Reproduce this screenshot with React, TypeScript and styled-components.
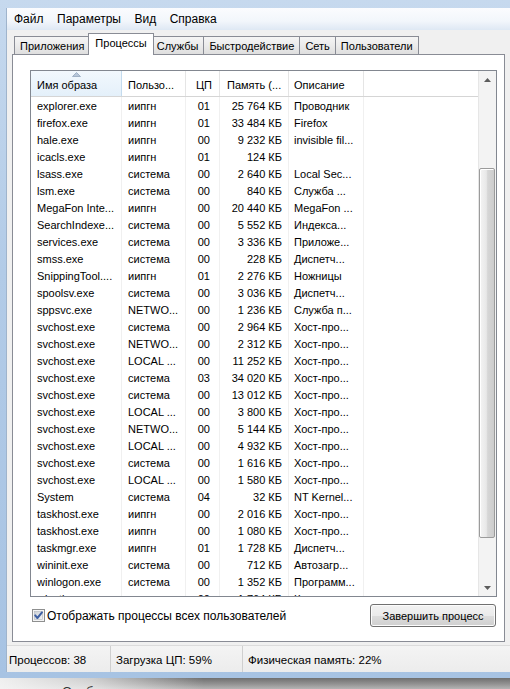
import React from "react";
import styled, { createGlobalStyle } from "styled-components";

const GlobalStyle = createGlobalStyle`
  html, body {
    margin: 0;
    padding: 0;
    background: #ffffff;
  }
  body {
    font-family: "Segoe UI", "Liberation Sans", Arial, sans-serif;
    color: #000;
  }
`;

interface Proc {
  name: string;
  user: string;
  cpu: string;
  mem: string;
  desc: string;
}

const processes: Proc[] = [
  { name: "explorer.exe", user: "иипгн", cpu: "01", mem: "25 764 КБ", desc: "Проводник" },
  { name: "firefox.exe", user: "иипгн", cpu: "01", mem: "33 484 КБ", desc: "Firefox" },
  { name: "hale.exe", user: "иипгн", cpu: "00", mem: "9 232 КБ", desc: "invisible fil..." },
  { name: "icacls.exe", user: "иипгн", cpu: "01", mem: "124 КБ", desc: "" },
  { name: "lsass.exe", user: "система", cpu: "00", mem: "2 640 КБ", desc: "Local Sec..." },
  { name: "lsm.exe", user: "система", cpu: "00", mem: "840 КБ", desc: "Служба ..." },
  { name: "MegaFon Inte...", user: "иипгн", cpu: "00", mem: "20 440 КБ", desc: "MegaFon ..." },
  { name: "SearchIndexe...", user: "система", cpu: "00", mem: "5 552 КБ", desc: "Индекса..." },
  { name: "services.exe", user: "система", cpu: "00", mem: "3 336 КБ", desc: "Приложе..." },
  { name: "smss.exe", user: "система", cpu: "00", mem: "228 КБ", desc: "Диспетч..." },
  { name: "SnippingTool....", user: "иипгн", cpu: "01", mem: "2 276 КБ", desc: "Ножницы" },
  { name: "spoolsv.exe", user: "система", cpu: "00", mem: "3 036 КБ", desc: "Диспетч..." },
  { name: "sppsvc.exe", user: "NETWO...", cpu: "00", mem: "1 236 КБ", desc: "Служба п..." },
  { name: "svchost.exe", user: "система", cpu: "00", mem: "2 964 КБ", desc: "Хост-про..." },
  { name: "svchost.exe", user: "NETWO...", cpu: "00", mem: "2 312 КБ", desc: "Хост-про..." },
  { name: "svchost.exe", user: "LOCAL ...", cpu: "00", mem: "11 252 КБ", desc: "Хост-про..." },
  { name: "svchost.exe", user: "система", cpu: "03", mem: "34 020 КБ", desc: "Хост-про..." },
  { name: "svchost.exe", user: "система", cpu: "00", mem: "13 012 КБ", desc: "Хост-про..." },
  { name: "svchost.exe", user: "LOCAL ...", cpu: "00", mem: "3 800 КБ", desc: "Хост-про..." },
  { name: "svchost.exe", user: "NETWO...", cpu: "00", mem: "5 144 КБ", desc: "Хост-про..." },
  { name: "svchost.exe", user: "LOCAL ...", cpu: "00", mem: "4 932 КБ", desc: "Хост-про..." },
  { name: "svchost.exe", user: "система", cpu: "00", mem: "1 616 КБ", desc: "Хост-про..." },
  { name: "svchost.exe", user: "LOCAL ...", cpu: "00", mem: "1 580 КБ", desc: "Хост-про..." },
  { name: "System", user: "система", cpu: "04", mem: "32 КБ", desc: "NT Kernel..." },
  { name: "taskhost.exe", user: "иипгн", cpu: "00", mem: "2 016 КБ", desc: "Хост-про..." },
  { name: "taskhost.exe", user: "иипгн", cpu: "00", mem: "1 080 КБ", desc: "Хост-про..." },
  { name: "taskmgr.exe", user: "иипгн", cpu: "01", mem: "1 728 КБ", desc: "Диспетч..." },
  { name: "wininit.exe", user: "система", cpu: "00", mem: "712 КБ", desc: "Автозагр..." },
  { name: "winlogon.exe", user: "система", cpu: "00", mem: "1 352 КБ", desc: "Программ..." },
  { name: "wisptis.exe", user: "иипгн", cpu: "00", mem: "1 764 КБ", desc: "Компон..." },
];

type Align = "left" | "right";

interface Column {
  key: keyof Proc;
  title: string;
  width: number;
  headAlign: Align;
  bodyAlign: Align;
  headPad: number;
  bodyPad: number;
}

const columns: Column[] = [
  { key: "name", title: "Имя образа", width: 91, headAlign: "left", bodyAlign: "left", headPad: 6, bodyPad: 6 },
  { key: "user", title: "Пользо...", width: 64, headAlign: "left", bodyAlign: "left", headPad: 6, bodyPad: 6 },
  { key: "cpu", title: "ЦП", width: 34, headAlign: "right", bodyAlign: "right", headPad: 7, bodyPad: 10 },
  { key: "mem", title: "Память (...", width: 69, headAlign: "left", bodyAlign: "right", headPad: 7, bodyPad: 7 },
  { key: "desc", title: "Описание", width: 75, headAlign: "left", bodyAlign: "left", headPad: 5, bodyPad: 5 },
];

const tabs = ["Приложения", "Процессы", "Службы", "Быстродействие", "Сеть", "Пользователи"];
const menu = ["Файл", "Параметры", "Вид", "Справка"];

const SortArrow = () => (
  <SortMark width="9" height="5" viewBox="0 0 9 5">
    <path d="M0.5 4.5 L4.5 0.5 L8.5 4.5 Z" fill="#b7c6d8" stroke="#93a6bd" strokeWidth="0.8" />
  </SortMark>
);

const Arrow: React.FC<{ down?: boolean }> = ({ down }) => (
  <svg width="7" height="4" viewBox="0 0 7 4">
    <path d={down ? "M0 0 H7 L3.5 4 Z" : "M0 4 H7 L3.5 0 Z"} fill="#5c5c5c" />
  </svg>
);

const CheckIcon = () => (
  <svg width="13" height="13" viewBox="0 0 13 13">
    <defs>
      <linearGradient id="cbInner" x1="0" y1="0" x2="1" y2="1">
        <stop offset="0" stopColor="#cbd0d6" />
        <stop offset="1" stopColor="#f6f6f6" />
      </linearGradient>
    </defs>
    <rect x="0.5" y="0.5" width="12" height="12" fill="#f4f4f4" stroke="#8e8f8f" />
    <rect x="2.5" y="2.5" width="8" height="8" fill="url(#cbInner)" stroke="#b2b7bd" strokeWidth="0.6" />
    <path d="M3.2 6.4 L5.4 9 L10 3.4" fill="none" stroke="#3f60a3" strokeWidth="2" strokeLinecap="round" strokeLinejoin="round" />
  </svg>
);

export default function App() {
  return (
    <>
      <GlobalStyle />
      <Screen>
        <Frame>
          <Client>
            <MenuBar>
              {menu.map((m) => (
                <MenuItem key={m}>{m}</MenuItem>
              ))}
            </MenuBar>
            <TabStrip>
              {tabs.map((t) => (
                <Tab key={t} $active={t === "Процессы"}>
                  {t}
                </Tab>
              ))}
            </TabStrip>
            <Panel>
              <ListView>
                <ListMain>
                  <HeaderRow>
                    {columns.map((c, i) => (
                      <HeaderCell
                        key={c.key}
                        $width={c.width}
                        $align={c.headAlign}
                        $pad={c.headPad}
                        $sorted={i === 0}
                      >
                        {i === 0 && <SortArrow />}
                        {c.title}
                      </HeaderCell>
                    ))}
                    <HeaderFiller />
                  </HeaderRow>
                  <Body>
                    {processes.map((p, r) => (
                      <Row key={r}>
                        {columns.map((c) => (
                          <Cell key={c.key} $width={c.width} $align={c.bodyAlign} $pad={c.bodyPad}>
                            {p[c.key]}
                          </Cell>
                        ))}
                      </Row>
                    ))}
                  </Body>
                </ListMain>
                <ScrollBar>
                  <ScrollButton>
                    <Arrow />
                  </ScrollButton>
                  <ScrollThumb />
                  <ScrollRest />
                  <ScrollButton>
                    <Arrow down />
                  </ScrollButton>
                </ScrollBar>
              </ListView>
              <BottomRow>
                <CheckLabel>
                  <CheckIcon />
                  Отображать процессы всех пользователей
                </CheckLabel>
                <EndButton>Завершить процесс</EndButton>
              </BottomRow>
            </Panel>
            <StatusBar>
              <StatusCell $width={104} $pad={2}>
                Процессов: 38
              </StatusCell>
              <StatusCell $width={132} $pad={5}>
                Загрузка ЦП: 59%
              </StatusCell>
              <StatusCell $pad={5} $last>
                Физическая память: 22%
              </StatusCell>
            </StatusBar>
          </Client>
        </Frame>
        <Outside>
          <OutsideText>Особые</OutsideText>
        </Outside>
      </Screen>
    </>
  );
}

const Screen = styled.div`
  width: 510px;
  height: 689px;
  overflow: hidden;
  display: flex;
  flex-direction: column;
  background: #ffffff;
`;

const Frame = styled.div`
  height: 678px;
  box-sizing: border-box;
  padding: 8px 0 6px 6px;
  background: linear-gradient(to bottom, #c6d9ee 0%, #b2cbe7 40%, #a7c3e3 100%);
  display: flex;
`;

const Client = styled.div`
  flex: 1;
  display: flex;
  flex-direction: column;
  background: #f0f0f0;
  border-left: 1px solid #9fb4cc;
`;

const MenuBar = styled.div`
  height: 22px;
  display: flex;
  align-items: center;
  font-size: 12px;
  background: linear-gradient(to bottom, #fbfcfe 0%, #f2f6fb 60%, #dee8f4 100%);
`;

const MenuItem = styled.div`
  padding: 0 6.5px 0 7px;
  line-height: 22px;
`;

const TabStrip = styled.div`
  height: 24px;
  display: flex;
  align-items: flex-end;
  padding-left: 6px;
  font-size: 11px;
  position: relative;
  z-index: 1;
`;

const Tab = styled.div<{ $active?: boolean }>`
  box-sizing: border-box;
  height: ${(p) => (p.$active ? "22px" : "18px")};
  margin: ${(p) => (p.$active ? "0 -2px -1px -2px" : "0 0 0 -1px")};
  padding: ${(p) => (p.$active ? "0 6px 4px" : "1px 5px 0")};
  display: flex;
  align-items: center;
  border: 1px solid #898c95;
  border-bottom: none;
  background: ${(p) =>
    p.$active ? "#ffffff" : "linear-gradient(to bottom, #f5f5f5 0%, #ebebeb 50%, #dedede 100%)"};
  position: relative;
  z-index: ${(p) => (p.$active ? 2 : 1)};
  white-space: nowrap;

  &:first-child {
    margin-left: 1px;
  }
`;

const Panel = styled.div`
  box-sizing: border-box;
  height: 588px;
  margin: 0 5px;
  border: 1px solid #898c95;
  background: #ffffff;
  padding: 15px 7px 14px 17px;
  display: flex;
  flex-direction: column;
  gap: 7px;
`;

const ListView = styled.div`
  box-sizing: border-box;
  height: 527px;
  border: 1px solid #828790;
  display: flex;
  overflow: hidden;
  font-size: 11px;
`;

const ListMain = styled.div`
  flex: 1;
  min-width: 0;
  display: flex;
  flex-direction: column;
`;

const HeaderRow = styled.div`
  box-sizing: border-box;
  height: 26px;
  flex: none;
  display: flex;
  border-bottom: 1px solid #d5d5d5;
`;

const HeaderCell = styled.div<{ $width: number; $align: Align; $pad: number; $sorted?: boolean }>`
  box-sizing: border-box;
  position: relative;
  width: ${(p) => p.$width}px;
  flex: none;
  display: flex;
  align-items: center;
  justify-content: ${(p) => (p.$align === "right" ? "flex-end" : "flex-start")};
  padding: 3px ${(p) => (p.$align === "right" ? p.$pad : 0)}px 0
    ${(p) => (p.$align === "left" ? p.$pad : 0)}px;
  border-right: 1px solid ${(p) => (p.$sorted ? "#c4dbee" : "#e5e5e5")};
  background: ${(p) => (p.$sorted ? "linear-gradient(to bottom, #f2f8fd, #e4f0fa)" : "#ffffff")};
  white-space: nowrap;
  overflow: hidden;
`;

const HeaderFiller = styled.div`
  flex: 1;
`;

const SortMark = styled.svg`
  position: absolute;
  top: 1px;
  left: 50%;
  margin-left: -4px;
`;

const Body = styled.div`
  flex: 1;
  overflow: hidden;
  display: flex;
  flex-direction: column;
  padding-top: 1px;
  background: linear-gradient(#f0f0f0, #f0f0f0) no-repeat 90px 0 / 1px 100%,
    linear-gradient(#f0f0f0, #f0f0f0) no-repeat 154px 0 / 1px 100%,
    linear-gradient(#f0f0f0, #f0f0f0) no-repeat 188px 0 / 1px 100%,
    linear-gradient(#f0f0f0, #f0f0f0) no-repeat 257px 0 / 1px 100%,
    linear-gradient(#f0f0f0, #f0f0f0) no-repeat 332px 0 / 1px 100%;
`;

const Row = styled.div`
  height: 17px;
  flex: none;
  display: flex;
`;

const Cell = styled.div<{ $width: number; $align: Align; $pad: number }>`
  box-sizing: border-box;
  width: ${(p) => p.$width}px;
  flex: none;
  line-height: 17px;
  text-align: ${(p) => p.$align};
  padding: 0 ${(p) => (p.$align === "right" ? p.$pad : 1)}px 0
    ${(p) => (p.$align === "left" ? p.$pad : 0)}px;
  white-space: nowrap;
  overflow: hidden;
`;

const ScrollBar = styled.div`
  width: 17px;
  flex: none;
  display: flex;
  flex-direction: column;
  background: #f3f3f3;
  border-left: 1px solid #e6e6e6;
`;

const ScrollButton = styled.div`
  height: 17px;
  flex: none;
  display: flex;
  align-items: center;
  justify-content: center;
`;

const ScrollThumb = styled.div`
  box-sizing: border-box;
  margin: 80px 1px 0 0;
  height: 370px;
  flex: none;
  border: 1px solid #9b9b9b;
  border-radius: 2px;
  background: linear-gradient(to right, #f4f4f4 0%, #e8e8e8 45%, #d6d6d6 55%, #cdcdcd 100%);
  box-shadow: inset 1px 1px 0 #ffffff;
`;

const ScrollRest = styled.div`
  flex: 1;
`;

const BottomRow = styled.div`
  height: 23px;
  display: flex;
  align-items: center;
  justify-content: space-between;
  padding: 0 1px 0 2px;
`;

const CheckLabel = styled.label`
  display: flex;
  align-items: center;
  gap: 2px;
  font-size: 12px;
`;

const EndButton = styled.button`
  width: 126px;
  height: 23px;
  border: 1px solid #707070;
  border-radius: 3px;
  background: linear-gradient(to bottom, #f2f2f2 0%, #ebebeb 50%, #dddddd 51%, #cfcfcf 100%);
  box-shadow: inset 0 0 0 1px #fcfcfc;
  font-family: inherit;
  font-size: 11px;
  color: #000;
  padding: 0;
`;

const StatusBar = styled.div`
  box-sizing: border-box;
  margin-top: 3px;
  height: 27px;
  display: flex;
  font-size: 11.5px;
  border-top: 1px solid #dcdcdc;
  background: linear-gradient(to bottom, #f4f4f4, #ececec);
`;

const StatusCell = styled.div<{ $width?: number; $pad: number; $last?: boolean }>`
  box-sizing: border-box;
  width: ${(p) => (p.$width ? `${p.$width}px` : "auto")};
  flex: ${(p) => (p.$width ? "none" : "1")};
  display: flex;
  align-items: center;
  padding: 2px 0 0 ${(p) => p.$pad}px;
  border-right: ${(p) => (p.$last ? "none" : "1px solid #cfcfcf")};
  white-space: nowrap;
`;

const Outside = styled.div`
  flex: 1;
  position: relative;
  overflow: hidden;
  background: linear-gradient(to right, rgba(246, 246, 246, 0.95) 0%, rgba(246, 246, 246, 0.7) 18%, rgba(246, 246, 246, 0) 40%),
    linear-gradient(to bottom, #6f6f6f 0%, #8f8f8f 50%, #b4b4b4 100%);
`;

const OutsideText = styled.div`
  padding: 7px 0 0 62px;
  font-size: 13px;
  color: #333;
  line-height: 14px;
`;
